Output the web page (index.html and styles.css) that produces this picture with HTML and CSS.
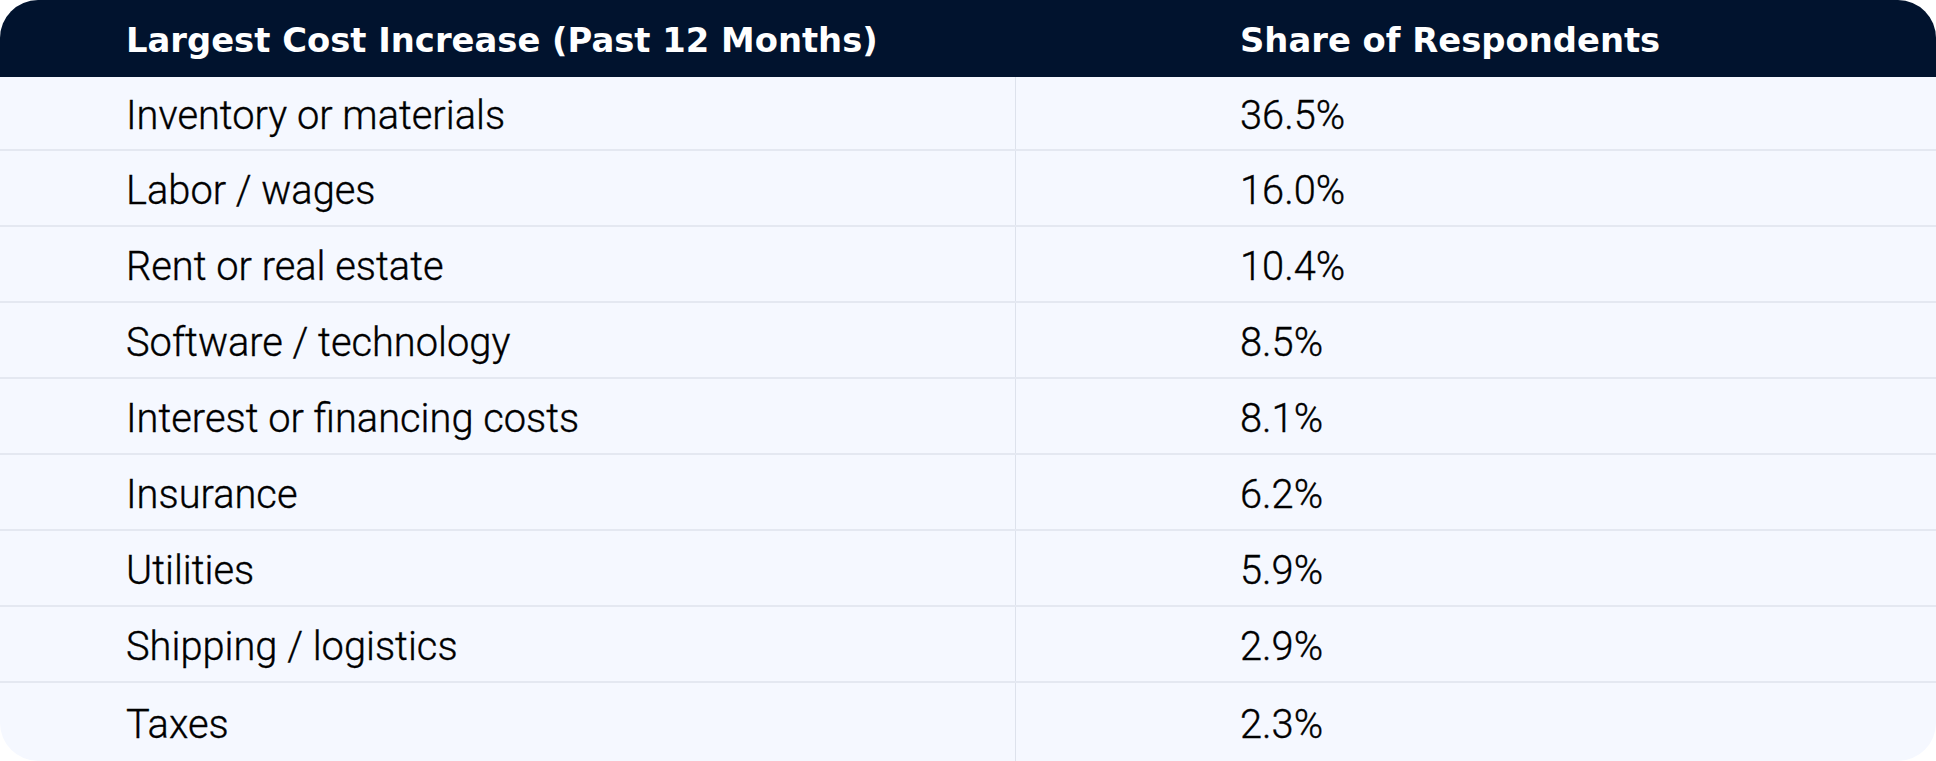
FILE: index.html
```html
<!DOCTYPE html>
<html lang="en">
<head>
<meta charset="utf-8">
<title>Largest Cost Increase</title>
<link rel="stylesheet" href="styles.css">
</head>
<body>
<div class="table">
  <div class="row head">
    <div class="cell c1">Largest Cost Increase (Past 12 Months)</div>
    <div class="cell c2">Share of Respondents</div>
  </div>
  <div class="row first"><div class="cell c1">Inventory or materials</div><div class="cell c2">36.5%</div></div>
  <div class="row"><div class="cell c1">Labor / wages</div><div class="cell c2">16.0%</div></div>
  <div class="row"><div class="cell c1">Rent or real estate</div><div class="cell c2">10.4%</div></div>
  <div class="row"><div class="cell c1">Software / technology</div><div class="cell c2">8.5%</div></div>
  <div class="row"><div class="cell c1">Interest or financing costs</div><div class="cell c2">8.1%</div></div>
  <div class="row"><div class="cell c1">Insurance</div><div class="cell c2">6.2%</div></div>
  <div class="row"><div class="cell c1">Utilities</div><div class="cell c2">5.9%</div></div>
  <div class="row"><div class="cell c1">Shipping / logistics</div><div class="cell c2">2.9%</div></div>
  <div class="row last"><div class="cell c1">Taxes</div><div class="cell c2">2.3%</div></div>
</div>
</body>
</html>
```
FILE: styles.css
```css
html, body {
  margin: 0;
  padding: 0;
  background: #ffffff;
}
.table {
  width: 1936px;
  height: 761px;
  border-radius: 38px;
  overflow: hidden;
  background: #f5f8ff;
  display: flex;
  flex-direction: column;
  font-family: Roboto, "Liberation Sans", sans-serif;
  color: #000000;
}
.row {
  display: flex;
  height: 76px;
  box-sizing: border-box;
  border-bottom: 2px solid #e4e8f1;
}
.row.first {
  height: 74px;
}
.row.last {
  height: 78px;
  border-bottom: none;
}
.row.head {
  height: 77px;
  background: #01132e;
  color: #ffffff;
  border-bottom: none;
}
.cell {
  display: flex;
  align-items: center;
  box-sizing: border-box;
  font-size: 39.8px;
  font-weight: 300;
  -webkit-text-stroke: 0.35px #000000;
  padding-top: 4px;
}
.c1 {
  width: 1016px;
  padding-left: 126px;
  border-right: 1px solid #dde2ec;
}
.c2 {
  flex: 1;
  padding-left: 224px;
}
.head .cell {
  font-family: "DejaVu Sans", "Liberation Sans", sans-serif;
  font-weight: 700;
  font-size: 33.8px;
  -webkit-text-stroke: 0;
  border-right: none;
  padding-top: 3px;
}
```
